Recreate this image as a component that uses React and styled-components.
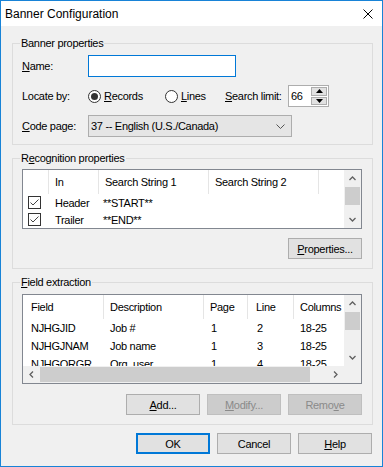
import React from 'react';
import styled, { createGlobalStyle } from 'styled-components';

const Global = createGlobalStyle`
  html, body { margin: 0; padding: 0; }
  body {
    width: 383px; height: 467px; overflow: hidden; background: #f0f0f0;
    font-family: "Liberation Sans", Arial, sans-serif; font-size: 11px; color: #000;
    letter-spacing: -0.3px;
  }
  * { box-sizing: border-box; }
`;

const Window = styled.div`
  width: 383px; height: 467px; border: 1px solid #1883d7;
  display: flex; flex-direction: column; background: #f0f0f0;
`;

const TitleBar = styled.div`
  height: 25px; flex-shrink: 0; background: #fff;
  display: flex; align-items: center; justify-content: space-between;
  padding: 0 9px 0 4px;
`;

const Title = styled.span`
  font-size: 12px; letter-spacing: 0; color: #000;
`;

const Body = styled.div`
  display: flex; flex-direction: column; gap: 7px;
  padding: 11px 9px 0 11px;
`;

const Group = styled.fieldset`
  margin: 0; padding: 0; min-width: 0;
  border: 1px solid #dcdcdc;
`;

const Legend = styled.legend`
  margin-left: 7px; padding: 0 1px; line-height: 13px; font-size: 11px;
`;

const GroupBody = styled.div`
  display: flex; flex-direction: column;
  gap: ${p => p.$gap}px;
  padding: ${p => p.$pt}px 10px ${p => p.$pb}px 9px;
`;

const FormRow = styled.div`
  display: flex; align-items: center; height: 22px;
`;

const Label = styled.span`
  width: ${p => p.$w}px; flex-shrink: 0; white-space: nowrap;
`;

const U = styled.span`
  text-decoration: underline;
`;

const TextInput = styled.div`
  width: 148px; height: 22px; background: #fff; border: 1px solid #0078d7;
`;

const RadioOption = styled.span`
  width: ${p => p.$w}px; display: flex; align-items: center; gap: 3px; flex-shrink: 0;
`;

const RadioCircle = styled.span`
  width: 13px; height: 13px; border-radius: 50%; border: 1px solid #333;
  background: #fff; display: inline-flex; align-items: center; justify-content: center;
  &::after {
    content: ''; width: 7px; height: 7px; border-radius: 50%;
    background: ${p => (p.$checked ? '#333' : 'transparent')};
  }
`;

const Spin = styled.div`
  width: 41px; height: 22px; border: 1px solid #adadad; background: #fff;
  display: flex; align-items: stretch;
`;

const SpinText = styled.span`
  flex: 1; padding-left: 2px; display: flex; align-items: center;
`;

const SpinButtons = styled.div`
  width: 17px; display: flex; flex-direction: column; gap: 1px; padding: 1px 1px 1px 0;
`;

const SpinButton = styled.div`
  flex: 1; background: #e1e1e1; border: 1px solid #adadad;
  display: flex; align-items: center; justify-content: center;
`;

const Select = styled.div`
  width: 204px; height: 22px; background: #e5e5e5; border: 1px solid #adadad;
  display: flex; align-items: center; justify-content: space-between;
  padding: 0 6px 0 2px;
`;

const ListFrame = styled.div`
  width: 340px; height: ${p => p.$h}px; background: #fff; border: 1px solid #828790;
  display: grid;
  grid-template-columns: 1fr 17px;
  grid-template-rows: ${p => (p.$hscroll ? '1fr 17px' : '1fr')};
  overflow: hidden;
`;

const ListContent = styled.div`
  overflow: hidden; display: flex; flex-direction: column;
`;

const HeaderRow = styled.div`
  display: flex; height: 24px; flex-shrink: 0;
`;

const HeaderCell = styled.div`
  width: ${p => p.$w}px; flex-shrink: 0; padding-left: ${p => p.$pad}px;
  border-right: ${p => (p.$last ? 'none' : '1px solid #e5e5e5')};
  display: flex; align-items: center; white-space: nowrap; overflow: hidden;
`;

const Row = styled.div`
  display: flex; height: ${p => p.$h}px; flex-shrink: 0;
`;

const Cell = styled.div`
  width: ${p => p.$w}px; flex-shrink: 0; padding-left: ${p => p.$pad}px;
  display: flex; align-items: center; white-space: nowrap; overflow: hidden;
`;

const CheckBox = styled.span`
  width: 13px; height: 13px; border: 1px solid #333; background: #fff;
  display: inline-flex; align-items: center; justify-content: center;
`;

const VScroll = styled.div`
  background: #f0f0f0; display: flex; flex-direction: column;
`;

const HScroll = styled.div`
  background: #f0f0f0; display: flex;
`;

const Corner = styled.div`
  background: #f0f0f0;
`;

const ArrowBox = styled.div`
  width: 17px; height: 17px; flex-shrink: 0;
  display: flex; align-items: center; justify-content: center;
`;

const Thumb = styled.div`
  background: #cdcdcd;
  ${p => (p.$vertical ? `height: ${p.$size}px; margin: 0 1px;` : `width: ${p.$size}px; margin: 1px 0;`)}
  flex-shrink: 0;
`;

const Track = styled.div`
  flex: 1;
`;

const ButtonRow = styled.div`
  display: flex; justify-content: flex-end; gap: 7px;
  margin-right: ${p => p.$mr || 0}px;
`;

const Button = styled.div`
  width: 74px; height: 21px; flex-shrink: 0;
  display: flex; align-items: center; justify-content: center;
  background: ${p => (p.$disabled ? '#cccccc' : '#e1e1e1')};
  color: ${p => (p.$disabled ? '#8a8a8a' : '#000')};
  border: ${p => (p.$default ? '2px solid #0078d7' : p.$disabled ? '1px solid #bfbfbf' : '1px solid #adadad')};
`;

const Chevron = ({ dir }) => {
  const paths = {
    up: 'M0.5 4 L3.5 1 L6.5 4',
    down: 'M0.5 1 L3.5 4 L6.5 1',
    left: 'M4 0.5 L1 3.5 L4 6.5',
    right: 'M1 0.5 L4 3.5 L1 6.5',
  };
  const horiz = dir === 'left' || dir === 'right';
  return (
    <svg width={horiz ? 5 : 7} height={horiz ? 7 : 5} viewBox={horiz ? '0 0 5 7' : '0 0 7 5'}>
      <path d={paths[dir]} stroke="#606060" strokeWidth="1.3" fill="none" />
    </svg>
  );
};

const Triangle = ({ up }) => (
  <svg width="7" height="4" viewBox="0 0 7 4">
    <path d={up ? 'M0 4 L3.5 0 L7 4 Z' : 'M0 0 L3.5 4 L7 0 Z'} fill="#000" />
  </svg>
);

const Check = () => (
  <svg width="11" height="11" viewBox="0 0 11 11">
    <path d="M1.5 5.5 L4 8 L9.5 2.5" stroke="#444" strokeWidth="1" fill="none" />
  </svg>
);

const CloseIcon = () => (
  <svg width="10" height="10" viewBox="0 0 10 10">
    <path d="M0.5 0.5 L9.5 9.5 M9.5 0.5 L0.5 9.5" stroke="#000" strokeWidth="1" fill="none" />
  </svg>
);

const VScrollBar = ({ before, thumb }) => (
  <VScroll>
    <ArrowBox><Chevron dir="up" /></ArrowBox>
    {before > 0 && <div style={{ height: before }} />}
    <Thumb $vertical $size={thumb} />
    <Track />
    <ArrowBox><Chevron dir="down" /></ArrowBox>
  </VScroll>
);

const recogCols = [
  { w: 26, hp: 0, cp: 5 },
  { w: 50, hp: 6, cp: 6 },
  { w: 110, hp: 6, cp: 4 },
  { w: 110, hp: 6, cp: 4 },
  { w: 24, hp: 0, cp: 0 },
];

const recogRows = [
  { in: 'Header', s1: '**START**', s2: '' },
  { in: 'Trailer', s1: '**END**', s2: '' },
];

const fieldCols = [
  { w: 81, hp: 8, cp: 8, title: 'Field', key: 'field' },
  { w: 100, hp: 6, cp: 6, title: 'Description', key: 'desc' },
  { w: 44, hp: 6, cp: 7, title: 'Page', key: 'page' },
  { w: 46, hp: 8, cp: 9, title: 'Line', key: 'line' },
  { w: 60, hp: 6, cp: 6, title: 'Columns', key: 'cols' },
];

const fieldRows = [
  { field: 'NJHGJID', desc: 'Job #', page: '1', line: '2', cols: '18-25' },
  { field: 'NJHGJNAM', desc: 'Job name', page: '1', line: '3', cols: '18-25' },
  { field: 'NJHGORGR', desc: 'Org. user', page: '1', line: '4', cols: '18-25' },
];

export default function App() {
  return (
    <>
      <Global />
      <Window>
        <TitleBar>
          <Title>Banner Configuration</Title>
          <CloseIcon />
        </TitleBar>
        <Body>
          <Group>
            <Legend>Banner properties</Legend>
            <GroupBody $gap={8} $pt={5} $pb={7}>
              <FormRow>
                <Label $w={66}><U>N</U>ame:</Label>
                <TextInput />
              </FormRow>
              <FormRow>
                <Label $w={66}>Locate by:</Label>
                <RadioOption $w={77}>
                  <RadioCircle $checked />
                  <span><U>R</U>ecords</span>
                </RadioOption>
                <RadioOption $w={60}>
                  <RadioCircle />
                  <span><U>L</U>ines</span>
                </RadioOption>
                <Label $w={63}><U>S</U>earch limit:</Label>
                <Spin>
                  <SpinText>66</SpinText>
                  <SpinButtons>
                    <SpinButton><Triangle up /></SpinButton>
                    <SpinButton><Triangle /></SpinButton>
                  </SpinButtons>
                </Spin>
              </FormRow>
              <FormRow>
                <Label $w={66}><U>C</U>ode page:</Label>
                <Select>
                  <span>37 -- English (U.S./Canada)</span>
                  <svg width="9" height="5" viewBox="0 0 9 5">
                    <path d="M0.5 0.5 L4.5 4.5 L8.5 0.5" stroke="#555" strokeWidth="1" fill="none" />
                  </svg>
                </Select>
              </FormRow>
            </GroupBody>
          </Group>

          <Group>
            <Legend>R<U>e</U>cognition properties</Legend>
            <GroupBody $gap={9} $pt={4} $pb={9}>
              <ListFrame $h={60}>
                <ListContent>
                  <HeaderRow>
                    <HeaderCell $w={recogCols[0].w} $pad={0} />
                    <HeaderCell $w={recogCols[1].w} $pad={recogCols[1].hp}>In</HeaderCell>
                    <HeaderCell $w={recogCols[2].w} $pad={recogCols[2].hp}>Search String 1</HeaderCell>
                    <HeaderCell $w={recogCols[3].w} $pad={recogCols[3].hp}>Search String 2</HeaderCell>
                    <HeaderCell $w={recogCols[4].w} $pad={0} $last />
                  </HeaderRow>
                  {recogRows.map(r => (
                    <Row key={r.in} $h={17}>
                      <Cell $w={recogCols[0].w} $pad={recogCols[0].cp}>
                        <CheckBox><Check /></CheckBox>
                      </Cell>
                      <Cell $w={recogCols[1].w} $pad={recogCols[1].cp}>{r.in}</Cell>
                      <Cell $w={recogCols[2].w} $pad={recogCols[2].cp}>{r.s1}</Cell>
                      <Cell $w={recogCols[3].w} $pad={recogCols[3].cp}>{r.s2}</Cell>
                    </Row>
                  ))}
                </ListContent>
                <VScrollBar before={0} thumb={18} />
              </ListFrame>
              <ButtonRow>
                <Button><span><U>P</U>roperties...</span></Button>
              </ButtonRow>
            </GroupBody>
          </Group>

          <Group>
            <Legend><U>F</U>ield extraction</Legend>
            <GroupBody $gap={10} $pt={5} $pb={9}>
              <ListFrame $h={90} $hscroll>
                <ListContent>
                  <HeaderRow>
                    {fieldCols.map((c, i) => (
                      <HeaderCell key={c.key} $w={c.w} $pad={c.hp} $last={i === fieldCols.length - 1}>
                        {c.title}
                      </HeaderCell>
                    ))}
                  </HeaderRow>
                  {fieldRows.map(r => (
                    <Row key={r.field} $h={18}>
                      {fieldCols.map(c => (
                        <Cell key={c.key} $w={c.w} $pad={c.cp}>{r[c.key]}</Cell>
                      ))}
                    </Row>
                  ))}
                </ListContent>
                <VScrollBar before={0} thumb={18} />
                <HScroll>
                  <ArrowBox><Chevron dir="left" /></ArrowBox>
                  <Thumb $size={270} />
                  <Track />
                  <ArrowBox><Chevron dir="right" /></ArrowBox>
                </HScroll>
                <Corner />
              </ListFrame>
              <ButtonRow>
                <Button><span><U>A</U>dd...</span></Button>
                <Button $disabled><span><U>M</U>odify...</span></Button>
                <Button $disabled><span>Remo<U>v</U>e</span></Button>
              </ButtonRow>
            </GroupBody>
          </Group>

          <ButtonRow $mr={1} style={{ marginTop: 1 }}>
            <Button $default>OK</Button>
            <Button>Cancel</Button>
            <Button><span><U>H</U>elp</span></Button>
          </ButtonRow>
        </Body>
      </Window>
    </>
  );
}
